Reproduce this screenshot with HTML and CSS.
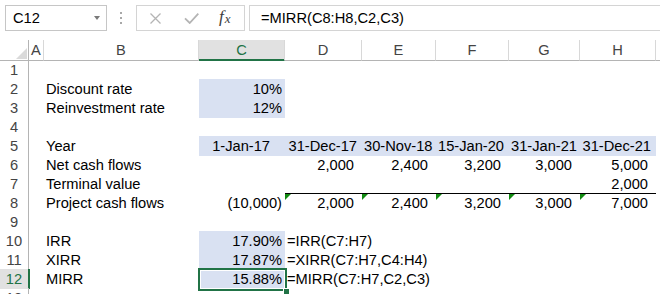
FILE: index.html
```html
<!DOCTYPE html>
<html>
<head>
<meta charset="utf-8">
<link rel="stylesheet" href="styles.css">
</head>
<body>
<div class="toolbar">
  <div class="namebox"><span class="nb-text">C12</span><span class="nb-arrow"></span></div>
  <div class="grip"><span></span><span></span><span></span></div>
  <div class="fxbtns">
    <svg class="ic-x" width="11" height="11" viewBox="0 0 11 11"><path d="M0.5 0.5L10.5 10.5M10.5 0.5L0.5 10.5" stroke="#b4b4b4" stroke-width="1.3" fill="none"/></svg>
    <svg class="ic-check" width="15" height="11" viewBox="0 0 15 11"><path d="M1 5.3L5.7 10L14.3 0.6" stroke="#b4b4b4" stroke-width="1.8" fill="none"/></svg>
    <span class="fx">f<span class="fx-x">x</span></span>
  </div>
  <div class="formula">=MIRR(C8:H8,C2,C3)</div>
</div>
<div class="sheet">
  <div class="hdr">
    <div class="corner"><span class="corner-tri"></span></div>
    <div class="ch">A</div>
    <div class="ch">B</div>
    <div class="ch ch-sel">C</div>
    <div class="ch">D</div>
    <div class="ch">E</div>
    <div class="ch">F</div>
    <div class="ch">G</div>
    <div class="ch">H</div>
    <div class="ch ch-last"></div>
  </div>
  <div class="row"><div class="rh">1</div></div>
  <div class="row"><div class="rh">2</div><div class="cell col-b">Discount rate</div><div class="cell col-c num fill">10%</div></div>
  <div class="row"><div class="rh">3</div><div class="cell col-b">Reinvestment rate</div><div class="cell col-c num fill">12%</div></div>
  <div class="row"><div class="rh">4</div></div>
  <div class="row"><div class="rh">5</div><div class="cell col-b">Year</div>
    <div class="cell col-c num fill date-first">1-Jan-17</div>
    <div class="cell col-d num fill date">31-Dec-17</div>
    <div class="cell col-e num fill date">30-Nov-18</div>
    <div class="cell col-f num fill date">15-Jan-20</div>
    <div class="cell col-g num fill date">31-Jan-21</div>
    <div class="cell col-h num fill date">31-Dec-21</div>
  </div>
  <div class="row"><div class="rh">6</div><div class="cell col-b">Net cash flows</div>
    <div class="cell col-d num acc">2,000</div>
    <div class="cell col-e num acc">2,400</div>
    <div class="cell col-f num acc">3,200</div>
    <div class="cell col-g num acc">3,000</div>
    <div class="cell col-h num acc">5,000</div>
  </div>
  <div class="row"><div class="rh">7</div><div class="cell col-b">Terminal value</div>
    <div class="cell col-h num acc">2,000</div>
  </div>
  <div class="row"><div class="rh">8</div><div class="cell col-b">Project cash flows</div>
    <div class="cell col-c num">(10,000)</div>
    <div class="cell col-d num acc topline err">2,000</div>
    <div class="cell col-e num acc topline err">2,400</div>
    <div class="cell col-f num acc topline err">3,200</div>
    <div class="cell col-g num acc topline err">3,000</div>
    <div class="cell col-h num acc topline err">7,000</div>
  </div>
  <div class="row"><div class="rh">9</div></div>
  <div class="row"><div class="rh">10</div><div class="cell col-b">IRR</div><div class="cell col-c num fill">17.90%</div><div class="cell col-d">=IRR(C7:H7)</div></div>
  <div class="row"><div class="rh">11</div><div class="cell col-b">XIRR</div><div class="cell col-c num fill">17.87%</div><div class="cell col-d">=XIRR(C7:H7,C4:H4)</div></div>
  <div class="row"><div class="rh rh-sel">12</div><div class="cell col-b">MIRR</div><div class="cell col-c num fill selected">15.88%</div><div class="cell col-d">=MIRR(C7:H7,C2,C3)</div></div>
  <div class="row"><div class="rh">13</div></div>
</div>
</body>
</html>
```

FILE: styles.css
```css
html, body {
  margin: 0;
  padding: 0;
}
body {
  width: 660px;
  height: 294px;
  overflow: hidden;
  background: #fff;
  color: #000;
  font-family: "Liberation Sans", Arial, sans-serif;
  font-size: 14.67px;
}

/* ---------- formula toolbar ---------- */
.toolbar {
  height: 40px;
  box-sizing: border-box;
  padding-top: 5px;
  display: flex;
  align-items: flex-start;
}
.namebox {
  margin-left: 5px;
  width: 102px;
  height: 26px;
  box-sizing: border-box;
  border: 1px solid #c6c6c6;
  display: flex;
  align-items: center;
  justify-content: space-between;
  padding: 0 6px 0 7px;
  line-height: 24px;
}
.nb-arrow {
  width: 0;
  height: 0;
  border-left: 3.5px solid transparent;
  border-right: 3.5px solid transparent;
  border-top: 4px solid #7a7a7a;
}
.grip {
  margin-left: 13px;
  margin-top: 7px;
  display: flex;
  flex-direction: column;
  gap: 3px;
}
.grip span {
  width: 2px;
  height: 2px;
  background: #a8a8a8;
}
.fxbtns {
  margin-left: 14px;
  width: 109px;
  height: 26px;
  box-sizing: border-box;
  border: 1px solid #d4d4d4;
  display: flex;
  align-items: center;
}
.ic-x {
  margin-left: 13px;
}
.ic-check {
  margin-left: 23px;
}
.fx {
  margin-left: 20px;
  font-family: "Liberation Serif", "Times New Roman", serif;
  font-style: italic;
  font-size: 17px;
  color: #3c3c3c;
  line-height: 1;
  margin-top: -3px;
}
.fx-x {
  font-size: 13px;
  margin-left: 1px;
  position: relative;
  top: 1px;
}
.formula {
  margin-left: 4px;
  flex: 1;
  height: 26px;
  box-sizing: border-box;
  border: 1px solid #d4d4d4;
  border-right: none;
  padding-left: 11px;
  line-height: 25px;
  white-space: nowrap;
}

/* ---------- sheet grid ---------- */
.hdr,
.row {
  display: grid;
  grid-template-columns: 29px 15px 155px 86px 77px 74px 73px 71px 76px 4px;
}
.hdr {
  height: 20px;
  line-height: 19px;
}
.ch {
  box-sizing: border-box;
  border-right: 1px solid #d8d8d8;
  border-bottom: 1px solid #b4b4b4;
  text-align: center;
  color: #444;
  padding-top: 1px;
}
.ch-last {
  border-right: none;
}
.ch-sel {
  background: #e1e1e1;
  color: #217346;
  border-bottom-color: #217346;
  box-shadow: inset 0 -1px 0 #217346;
}
.corner {
  box-sizing: border-box;
  border-right: 1px solid #b4b4b4;
  border-bottom: 1px solid #b4b4b4;
  display: flex;
  justify-content: flex-end;
  align-items: flex-end;
  padding: 0 1px 1px 0;
}
.corner-tri {
  width: 0;
  height: 0;
  border-left: 11px solid transparent;
  border-bottom: 11px solid #dadada;
}

.row {
  height: 19px;
  line-height: 19px;
}
.rh {
  grid-column: 1;
  box-sizing: border-box;
  border-right: 1px solid #b4b4b4;
  text-align: center;
  color: #444;
  padding-top: 1px;
}
.rh-sel {
  background: #e1e1e1;
  color: #217346;
  border-right-color: #217346;
  box-shadow: 1px 0 0 #217346;
}

.cell {
  position: relative;
  white-space: nowrap;
  padding: 1px 2px 0;
}
.col-b { grid-column: 3; }
.col-c { grid-column: 4; }
.col-d { grid-column: 5; }
.col-e { grid-column: 6; }
.col-f { grid-column: 7; }
.col-g { grid-column: 8; }
.col-h { grid-column: 9; }

.num {
  text-align: right;
  padding-right: 3px;
}
.acc {
  padding-right: 8px;
}
.date {
  padding-right: 5px;
}
.date-first {
  padding-right: 15px;
}
.fill {
  background: #d9e1f2;
}
.topline {
  box-shadow: inset 0 1px 0 #000;
}
.err::before {
  content: "";
  position: absolute;
  left: 0;
  top: 1px;
  width: 0;
  height: 0;
  border-top: 6px solid #118a11;
  border-right: 6px solid transparent;
}
.selected::after {
  content: "";
  position: absolute;
  left: -1px;
  top: -1px;
  right: -2px;
  bottom: -2px;
  border: 2px solid #217346;
  box-shadow: inset 0 0 0 1px #fff;
}
.selected::before {
  content: "";
  position: absolute;
  right: -4px;
  bottom: -5px;
  width: 5px;
  height: 5px;
  background: #217346;
  border: 1px solid #fff;
  border-right: none;
  border-bottom: none;
  z-index: 1;
}
```
